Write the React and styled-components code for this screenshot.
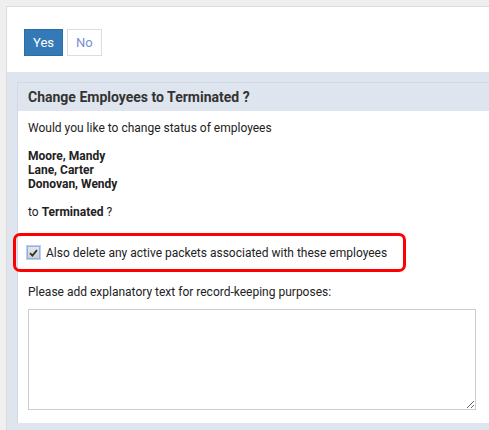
import styled, { createGlobalStyle } from "styled-components"

const Global = createGlobalStyle`
  html, body {
    margin: 0;
    padding: 0;
    background: #efefef;
    font-family: Roboto, "Liberation Sans", Arial, sans-serif;
    font-size: 12px;
    color: #222;
  }
`

const Page = styled.div`
  padding: 6px 0 0 6px;
  height: 430px;
  box-sizing: border-box;
  overflow: hidden;
`

const Frame = styled.div`
  background: #fff;
  border-top: 1px solid #dcdcdc;
  border-left: 1px solid #dcdcdc;
  height: 100%;
  display: flex;
  flex-direction: column;
`

const Toolbar = styled.div`
  height: 65px;
  box-sizing: border-box;
  padding: 22px 0 0 17px;
  display: flex;
  gap: 4px;
  align-items: flex-start;
`

const Toggle = styled.button`
  height: 27px;
  padding: 0 8px;
  font-family: inherit;
  font-size: 13px;
  border: 1px solid ${p => (p.$active ? "#2e6da4" : "#dddddd")};
  background: ${p => (p.$active ? "#337ab7" : "#fff")};
  color: ${p => (p.$active ? "#fff" : "#7b8fd0")};
  border-radius: 0;
  cursor: pointer;
`

const Shade = styled.div`
  flex: 1;
  background: #dfe5ee;
  padding: 10px 0 8px 10px;
  display: flex;
`

const Panel = styled.div`
  flex: 1;
  border-left: 1px solid #d3d9e2;
  border-top: 1px solid #d3d9e2;
  display: flex;
  flex-direction: column;
`

const PanelHead = styled.div`
  height: 28px;
  padding-left: 10px;
  display: flex;
  align-items: center;
  font-size: 14px;
  font-weight: 700;
  color: #333;
`

const PanelBody = styled.div`
  flex: 1;
  background: #fff;
  padding: 10px 0 0 10px;
`

const Line = styled.p`
  margin: 0;
  line-height: 14px;
`

const Names = styled.div`
  margin: 14px 0;
  font-weight: 700;
  line-height: 14px;
`

const Highlight = styled.div`
  margin: 14px 0 0 -15px;
  width: 393px;
  height: 39px;
  box-sizing: border-box;
  border: 3px solid #f00;
  border-radius: 7px;
  display: flex;
  align-items: center;
  gap: 6px;
  padding-left: 11px;
`

const Box = styled.span`
  width: 11px;
  height: 11px;
  border: 1px solid #8fb2e6;
  outline: 1px solid #b9d0f2;
  background: linear-gradient(#e6e6e6, #cfcfcf);
  display: flex;
  align-items: center;
  justify-content: center;
`

const Label = styled.label`
  font-size: 12px;
  color: #222;
`

const Note = styled.p`
  margin: 13px 0 0;
  line-height: 14px;
`

const TextBox = styled.textarea`
  display: block;
  margin-top: 10px;
  width: 448px;
  height: 101px;
  box-sizing: border-box;
  border: 1px solid #cccccc;
  font-family: inherit;
  font-size: 12px;
`

export default function App() {
  return (
    <>
      <Global />
      <Page>
        <Frame>
          <Toolbar>
            <Toggle $active>Yes</Toggle>
            <Toggle>No</Toggle>
          </Toolbar>
          <Shade>
            <Panel>
              <PanelHead>Change Employees to Terminated ?</PanelHead>
              <PanelBody>
                <Line>Would you like to change status of employees</Line>
                <Names>
                  <div>Moore, Mandy</div>
                  <div>Lane, Carter</div>
                  <div>Donovan, Wendy</div>
                </Names>
                <Line>
                  to <b>Terminated</b> ?
                </Line>
                <Highlight>
                  <Box>
                    <svg width="9" height="8" viewBox="0 0 9 8">
                      <path d="M1 4.2 L3.4 6.6 L8 1.2" fill="none" stroke="#333" strokeWidth="1.8" />
                    </svg>
                  </Box>
                  <Label>Also delete any active packets associated with these employees</Label>
                </Highlight>
                <Note>Please add explanatory text for record-keeping purposes:</Note>
                <TextBox />
              </PanelBody>
            </Panel>
          </Shade>
        </Frame>
      </Page>
    </>
  )
}
